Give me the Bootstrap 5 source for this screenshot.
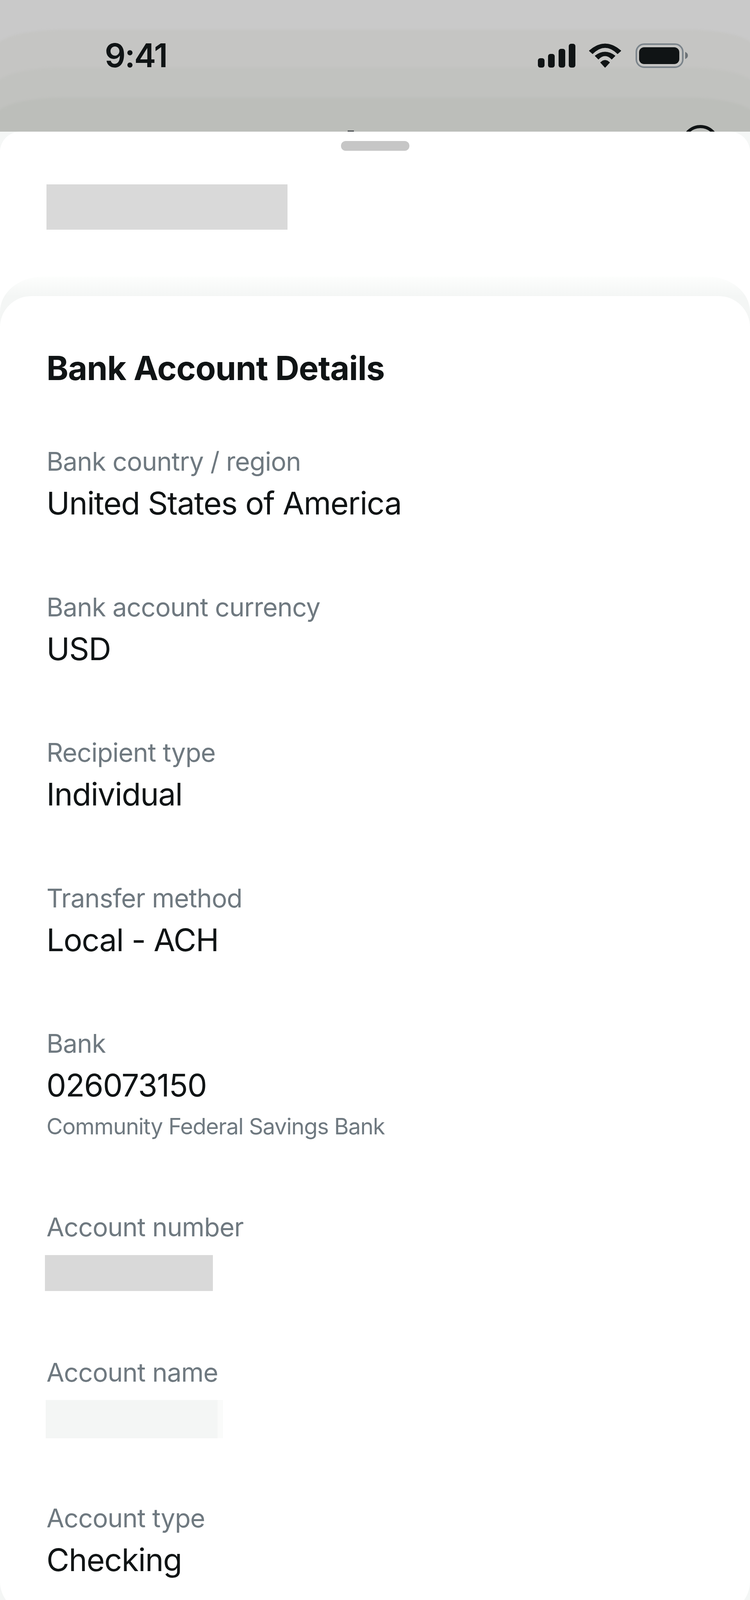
<!DOCTYPE html>
<html lang="en">
<head>
<meta charset="utf-8">
<title>Bank Account Details</title>
<link rel="stylesheet" href="https://cdn.jsdelivr.net/npm/bootstrap@5.3.0/dist/css/bootstrap.min.css">
<style>
html,body{margin:0;background:#f5f7f6}
body{width:1920px;height:4162px;overflow:hidden;font-family:Inter,"Liberation Sans",sans-serif;color:#101415}
.backdrop{height:337px;overflow:hidden;background:#c9c9c9}
.band{position:absolute;left:-10px;right:-10px;bottom:-60px;border-radius:170px 170px 0 0/46px 46px 0 0;filter:blur(2px)}
.band-a{top:76px;background:#c5c5c3}
.band-b{top:173px;background:#c1c2bf}
.band-c{top:250px;background:#bcbeba}
.statusbar{padding:80px 140px 0 268px}
.clock{font-weight:600;font-size:84px;line-height:84px;letter-spacing:-2.5px;margin-top:20px;color:#101415}
.peek{left:1745px;top:320px;width:96px;height:96px;border:8px solid #101415;border-radius:50%}
.dash{left:890px;top:334px;width:16px;height:3px;background:#4c5053}
.sheet-inner{background:#fff;border-radius:52px 52px 0 0;height:3825px;padding-top:24px}
.grabber{width:175px;height:25px;border-radius:12px;background:#c6c6c6;margin:0 auto}
.redact-top{width:617px;height:116px;background:#d9d9d9;margin:86px 0 120px 119px}
.glow{background:linear-gradient(#fdfefd,#f4f6f5 50px);border-radius:110px 110px 0 0/90px 90px 0 0;padding-top:50px;height:3454px}
.panel{background:#fff;border-radius:80px;height:3371px;padding:135px 119px 0}
.heading{font-size:85px;font-weight:700;line-height:100px;letter-spacing:-1px;margin:0 0 148px;color:#101415}
.field{height:372.5px}
.field-tall{height:469.5px}
.lbl{font-size:66px;line-height:80px;letter-spacing:-1px;color:#6f7980}
.val{font-size:80px;line-height:105px;letter-spacing:-1.45px;margin-top:14px}
.sub{font-size:57px;line-height:70px;letter-spacing:-1.25px;color:#6f7980;margin-top:19px}
.redact-a{width:430px;height:92px;background:#d9d9d9;margin:32px 0 0 -4px}
.redact-b{width:454px;height:98px;background:linear-gradient(90deg,#f4f6f5 97%,#fafbfa 97%);margin:31px 0 0 -2px}
</style>
</head>
<body>
<div class="backdrop position-relative">
  <div class="band band-a"></div><div class="band band-b"></div><div class="band band-c"></div>
  <div class="statusbar position-relative d-flex justify-content-between align-items-start">
    <div class="clock">9:41</div>
    <svg width="440" height="120" viewBox="0 0 440 120" aria-label="status icons">
      <rect x="37" y="69" width="17" height="24" rx="6" fill="#101415"/>
      <rect x="63" y="58" width="17" height="35" rx="6" fill="#101415"/>
      <rect x="90" y="45" width="17" height="48" rx="6" fill="#101415"/>
      <rect x="116" y="32" width="17" height="61" rx="6" fill="#101415"/>
      <path d="M168 50Q209 14 250 50L241 58Q209 26 177 58Z" fill="#101415" stroke="#101415" stroke-width="1" stroke-linejoin="round"/>
      <path d="M183 63Q209 43 235 63L226 72Q209 54 192 72Z" fill="#101415" stroke="#101415" stroke-width="1" stroke-linejoin="round"/>
      <path d="M197 80Q209 68 221 80L209 93Z" fill="#101415" stroke="#101415" stroke-width="1" stroke-linejoin="round"/>
      <rect x="289" y="33" width="119" height="59" rx="20" fill="none" stroke="#7b848b" stroke-width="4"/>
      <rect x="296" y="41" width="103" height="43" rx="13" fill="#101415"/>
      <path d="M414 53c5 2 7 5 7 9s-2 7-7 9z" fill="#6d7377"/>
    </svg>
  </div>
  <div class="peek position-absolute"></div>
  <div class="dash position-absolute"></div>
</div>
<div class="sheet-inner">
  <div class="grabber"></div>
  <div class="redact-top"></div>
  <div class="glow">
    <div class="panel">
      <h1 class="heading">Bank Account Details</h1>
      <div class="field"><div class="lbl">Bank country / region</div><div class="val">United States of America</div></div>
      <div class="field"><div class="lbl">Bank account currency</div><div class="val">USD</div></div>
      <div class="field"><div class="lbl">Recipient type</div><div class="val">Individual</div></div>
      <div class="field"><div class="lbl">Transfer method</div><div class="val">Local - ACH</div></div>
      <div class="field-tall"><div class="lbl">Bank</div><div class="val">026073150</div><div class="sub">Community Federal Savings Bank</div></div>
      <div class="field"><div class="lbl">Account number</div><div class="redact-a"></div></div>
      <div class="field"><div class="lbl">Account name</div><div class="redact-b"></div></div>
      <div><div class="lbl">Account type</div><div class="val">Checking</div></div>
    </div>
  </div>
</div>
<script src="https://cdn.jsdelivr.net/npm/bootstrap@5.3.0/dist/js/bootstrap.bundle.min.js"></script>
</body>
</html>
